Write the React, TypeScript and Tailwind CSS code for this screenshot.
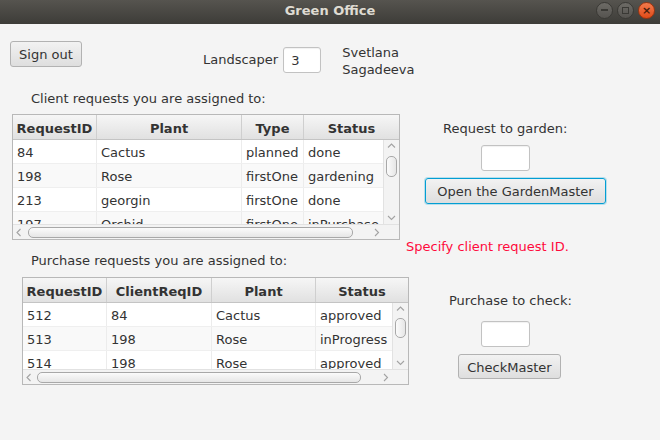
import React from "react";

type Col = { label: string; w: string };

type TableProps = {
  cols: Col[];
  rows: string[][];
  box: string;
  bodyH: string;
  vTop: string;
  vThumb: string;
  hThumb: string;
  hLead: string;
};

function Chevron({ dir }: { dir: "up" | "down" | "left" | "right" }) {
  const vertical = dir === "up" || dir === "down";
  const d = {
    up: "M1 4.5 L4.5 1 L8 4.5",
    down: "M1 1 L4.5 4.5 L8 1",
    left: "M4.5 1 L1 4.5 L4.5 8",
    right: "M1 1 L4.5 4.5 L1 8",
  }[dir];
  return (
    <svg
      width={vertical ? 9 : 6}
      height={vertical ? 6 : 9}
      viewBox={vertical ? "0 0 9 6" : "0 0 6 9"}
      fill="none"
      stroke="#a3a3a3"
      strokeWidth="1.1"
    >
      <path d={d} />
    </svg>
  );
}

function Table({ cols, rows, box, bodyH, vTop, vThumb, hThumb, hLead }: TableProps) {
  return (
    <div className={`${box} border border-[#b8b8b8] bg-white flex flex-col`}>
      {/* header */}
      <div className="flex h-[25px] border-b border-[#c4c4c4] shrink-0">
        {cols.map((c, i) => (
          <div
            key={c.label}
            className={`${c.w} shrink-0 flex items-center justify-center pt-[3px] font-bold text-[#333] bg-gradient-to-b from-[#f6f6f6] to-[#e1e1e1] ${
              i < cols.length - 1 ? "border-r border-[#cfcfcf]" : ""
            }`}
          >
            {c.label}
          </div>
        ))}
      </div>

      {/* body + vertical scrollbar */}
      <div className={`flex ${bodyH}`}>
        <div className="flex-1 overflow-hidden">
          {rows.map((r, ri) => (
            <div
              key={ri}
              className={`flex h-[24px] border-b border-[#efefef] ${ri % 2 ? "bg-[#f9f9f9]" : "bg-white"}`}
            >
              {r.map((cell, ci) => (
                <div
                  key={ci}
                  className={`${cols[ci].w} shrink-0 flex items-center pl-[4px] pt-[2px] text-[#333] whitespace-nowrap border-r border-[#ececec]`}
                >
                  {cell}
                </div>
              ))}
            </div>
          ))}
        </div>
        <div className="w-[16px] shrink-0 flex flex-col items-center bg-[#f3f3f3] border-l border-[#e2e2e2]">
          <div className="h-[12px] flex items-center justify-center">
            <Chevron dir="up" />
          </div>
          <div
            className={`${vTop} ${vThumb} w-[11px] rounded-[5px] border border-[#a8a8a8] bg-gradient-to-r from-[#fbfbfb] to-[#e6e6e6]`}
          />
          <div className="flex-1" />
          <div className="h-[13px] flex items-center justify-center">
            <Chevron dir="down" />
          </div>
        </div>
      </div>

      {/* horizontal scrollbar */}
      <div className="flex h-[15px] shrink-0 border-t border-[#e2e2e2]">
        <div className="flex-1 flex items-center bg-[#f3f3f3]">
          <div className="w-[12px] flex justify-center">
            <Chevron dir="left" />
          </div>
          <div
            className={`${hLead} ${hThumb} h-[11px] rounded-[5px] border border-[#a8a8a8] bg-gradient-to-b from-[#fbfbfb] to-[#e6e6e6]`}
          />
          <div className="flex-1" />
          <div className="w-[13px] flex justify-center">
            <Chevron dir="right" />
          </div>
        </div>
        <div className="w-[16px] shrink-0 bg-[#f3f3f3]" />
      </div>
    </div>
  );
}

function Field({ className, value }: { className: string; value?: string }) {
  return (
    <div
      className={`${className} h-[26px] bg-white border border-[#c2c2c2] rounded-[3px] shadow-[inset_0_1px_1px_rgba(0,0,0,0.06)] flex items-center pl-[7px] pt-[2px] text-[#333]`}
    >
      {value}
    </div>
  );
}

function Button({ className, label, focused }: { className: string; label: string; focused?: boolean }) {
  return (
    <button
      className={`${className} rounded-[3px] border bg-gradient-to-b from-[#f2f2f2] to-[#dedede] text-[#333] flex items-center justify-center pt-[2px] ${
        focused
          ? "border-[#039ed3] shadow-[0_0_0_1px_rgba(3,158,211,0.25)]"
          : "border-[#b2b2b2]"
      }`}
    >
      {label}
    </button>
  );
}

function TitleBar() {
  return (
    <div className="h-[24px] grid grid-cols-[1fr_auto_1fr] items-center bg-gradient-to-b from-[#56544f] to-[#3d3c38]">
      <div />
      <div className="font-bold text-[#dfdbd2] text-[13px] pb-[3px]">Green Office</div>
      <div className="flex justify-end items-center gap-[4px] pr-[5px] pb-[4px]">
        <div className="w-[17px] h-[17px] rounded-full bg-gradient-to-b from-[#6d6b66] to-[#55534f] border border-[#3a3935] flex items-center justify-center">
          <div className="w-[7px] h-[2px] bg-[#3a3935]" />
        </div>
        <div className="w-[17px] h-[17px] rounded-full bg-gradient-to-b from-[#6d6b66] to-[#55534f] border border-[#3a3935] flex items-center justify-center">
          <div className="w-[7px] h-[7px] border border-[#3a3935]" />
        </div>
        <div className="w-[17px] h-[17px] rounded-full bg-gradient-to-b from-[#f47a4b] to-[#df4a16] border border-[#9c3511] flex items-center justify-center text-[#4a1c0a] text-[11px] leading-none font-bold">
          ×
        </div>
      </div>
    </div>
  );
}

const clientCols: Col[] = [
  { label: "RequestID", w: "w-[84px]" },
  { label: "Plant", w: "w-[145px]" },
  { label: "Type", w: "w-[62px]" },
  { label: "Status", w: "w-[95px]" },
];

const clientRows = [
  ["84", "Cactus", "planned", "done"],
  ["198", "Rose", "firstOne", "gardening"],
  ["213", "georgin", "firstOne", "done"],
  ["197", "Orchid", "firstOne", "inPurchase"],
];

const purchaseCols: Col[] = [
  { label: "RequestID", w: "w-[84px]" },
  { label: "ClientReqID", w: "w-[105px]" },
  { label: "Plant", w: "w-[104px]" },
  { label: "Status", w: "w-[92px]" },
];

const purchaseRows = [
  ["512", "84", "Cactus", "approved"],
  ["513", "198", "Rose", "inProgress"],
  ["514", "198", "Rose", "approved"],
];

export default function App() {
  return (
    <div className="w-[660px] h-[440px] overflow-hidden font-['DejaVu_Sans',sans-serif] text-[13px] text-[#333]">
      <TitleBar />
      <div className="h-[416px] bg-[#f4f4f4]">
        {/* top row */}
        <div className="flex items-start h-[58px]">
          <Button className="ml-[10px] mt-[17px] w-[72px] h-[26px]" label="Sign out" />
          <div className="ml-[121px] mt-[23px] flex items-start">
            <span className="mt-[5px] leading-[16px]">Landscaper</span>
            <Field className="ml-[5px] w-[38px]" value="3" />
          </div>
          <div className="ml-[21px] mt-[20px] leading-[17px]">
            Svetlana
            <br />
            Sagadeeva
          </div>
        </div>

        <div className="flex">
          {/* tables */}
          <div className="w-[410px] shrink-0 flex flex-col">
            <div className="ml-[31px] mt-[9px] leading-[15px]">Client requests you are assigned to:</div>
            <Table
              cols={clientCols}
              rows={clientRows}
              box="ml-[12px] mt-[8px] w-[388px] h-[126px]"
              bodyH="h-[84px]"
              vTop="mt-[4px]"
              vThumb="h-[21px]"
              hThumb="w-[325px]"
              hLead="ml-[3px]"
            />
            <div className="ml-[31px] mt-[13px] leading-[15px]">Purchase requests you are assigned to:</div>
            <Table
              cols={purchaseCols}
              rows={purchaseRows}
              box="ml-[22px] mt-[9px] w-[387px] h-[108px]"
              bodyH="h-[66px]"
              vTop="mt-[3px]"
              vThumb="h-[20px]"
              hThumb="w-[324px]"
              hLead="ml-[2px]"
            />
          </div>

          {/* controls */}
          <div className="flex flex-col items-start">
            <div className="ml-[33px] mt-[39px] leading-[16px]">Request to garden:</div>
            <Field className="ml-[71px] mt-[8px] w-[49px]" />
            <Button
              className="ml-[15px] mt-[7px] w-[181px] h-[26px]"
              label="Open the GardenMaster"
              focused
            />
            <div className="-ml-[4px] mt-[35px] leading-[16px] text-[#ff0a3c]">Specify client request ID.</div>
            <div className="ml-[39px] mt-[38px] leading-[16px]">Purchase to check:</div>
            <Field className="ml-[71px] mt-[12px] w-[49px]" />
            <Button className="ml-[48px] mt-[7px] w-[103px] h-[25px]" label="CheckMaster" />
          </div>
        </div>
      </div>
    </div>
  );
}
